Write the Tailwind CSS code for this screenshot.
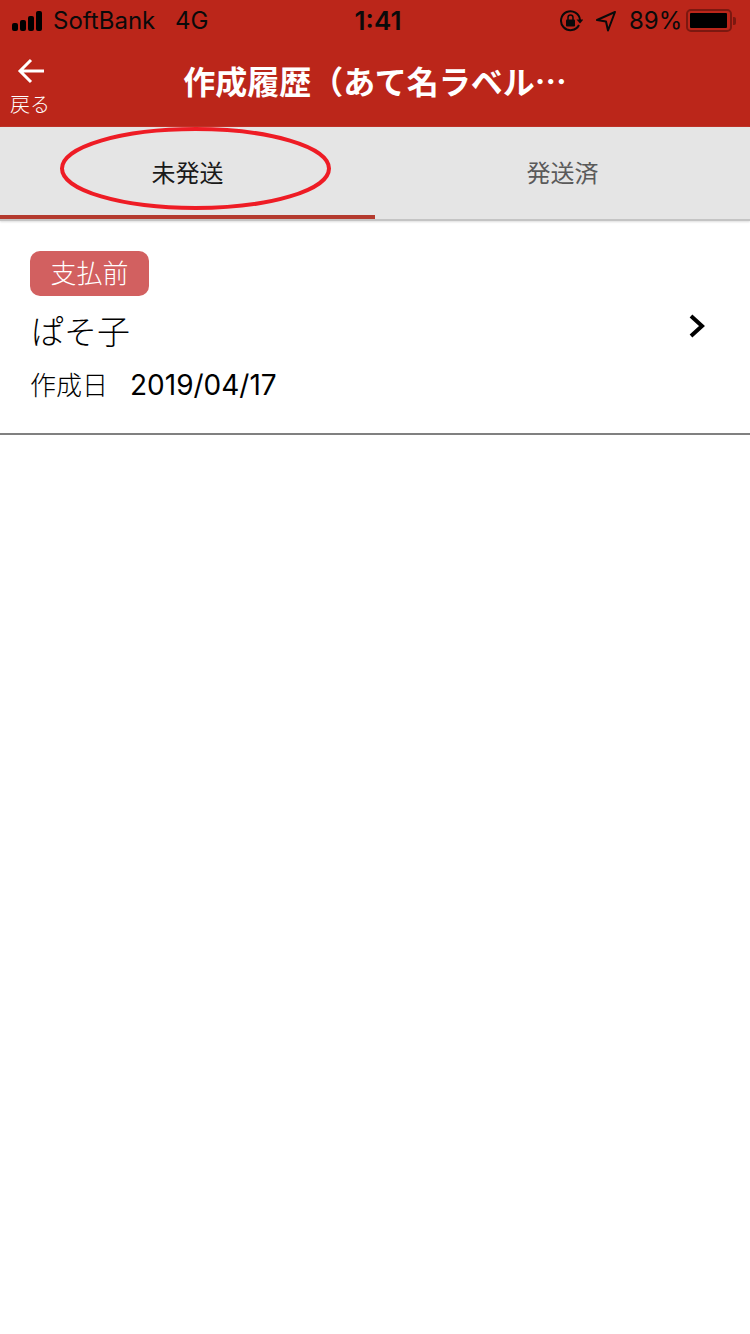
<!DOCTYPE html>
<html lang="ja">
<head>
    <meta charset="UTF-8">
    <meta name="viewport" content="width=device-width, initial-scale=1.0">
    <title>作成履歴</title>
    <script src="https://cdn.jsdelivr.net/npm/@tailwindcss/browser@4"></script>
</head>
<body class="bg-white font-['Inter','Noto_Sans_CJK_JP',sans-serif]">
    <div class="relative w-[750px] h-[1334px] overflow-hidden">
        <!-- header -->
        <div class="bg-[#bb261a] h-[127px]">
            <div class="h-[41px] pl-[12px] flex items-center text-[#0a0a0a] text-[24px] whitespace-nowrap">
                <div class="flex items-end gap-[2px] w-[33px] mt-[1px]">
                    <span class="w-[6px] h-[8px] rounded-[2px] bg-black"></span>
                    <span class="w-[6px] h-[11px] rounded-[2px] bg-black"></span>
                    <span class="w-[6px] h-[15px] rounded-[2px] bg-black"></span>
                    <span class="w-[6px] h-[20px] rounded-[2px] bg-black"></span>
                </div>
                <span class="ml-[8px] w-[122px]">SoftBank</span>
                <span class="w-[40px]">4G</span>
                <span class="ml-[132px] w-[62px] text-[26px] font-semibold text-center">1:41</span>
                <svg class="ml-[150px]" width="24" height="24" viewBox="0 0 24 24" fill="none" stroke="#0a0a0a" stroke-width="2">
                    <path d="M20 16a9.500 9.500 0 1 1 1-5"/>
                    <path d="M17.500 10.500h7l-3.500 4z" fill="#0a0a0a" stroke="none"/>
                    <rect x="7" y="10.500" width="9" height="7" rx="1" fill="#0a0a0a" stroke="none"/>
                    <path d="M9 11V8.500a2.500 2.500 0 0 1 5 0V11" stroke-width="1.500"/>
                </svg>
                <svg class="ml-[12px]" width="22" height="22" viewBox="0 0 22 22" fill="none" stroke="#0a0a0a" stroke-width="2" stroke-linejoin="round">
                    <path d="M20 2 2 10l9 1.500 2 9z"/>
                </svg>
                <span class="ml-[12px] w-[52px]">89%</span>
                <div class="ml-[5px] w-[46px] h-[23px] rounded-[5px] border-2 border-[#7c1810] p-[2px]">
                    <div class="w-[37px] h-full bg-black rounded-[1px]"></div>
                </div>
                <span class="ml-[1px] w-[3px] h-[8px] rounded-r-[2px] bg-[#7c1810]"></span>
            </div>
            <div class="relative h-[86px] flex items-center justify-center">
                <div class="absolute left-[10px] top-[16px] w-[40px] flex flex-col items-center text-white">
                    <svg class="ml-[2px]" width="30" height="28" viewBox="0 0 30 28" fill="none" stroke="white" stroke-width="3">
                        <path d="M28 14H4M15 3 4 14l11 11"/>
                    </svg>
                    <span class="mt-[8px] text-[20px] leading-[22px] whitespace-nowrap font-['Noto_Sans_CJK_JP'] font-light">戻る</span>
                </div>
                <h1 class="mb-[8px] text-white text-[32px] font-bold whitespace-nowrap font-['Noto_Sans_CJK_JP',sans-serif]">作成履歴（あて名ラベル…</h1>
            </div>
        </div>
        <!-- tabs -->
        <div class="h-[94px] bg-[#e5e5e5] flex border-b-2 border-[#c4c4c4] shadow-[0_1px_2px_#ddd]">
            <div class="flex-1 flex items-center justify-center border-b-4 border-[#b43a2e] text-[#1a1a1a] text-[24px] pt-[6px]">未発送</div>
            <div class="flex-1 flex items-center justify-center border-b-4 border-transparent text-[#5a5a5a] text-[24px] pt-[6px]">発送済</div>
        </div>
        <!-- list item -->
        <div class="h-[214px] border-b-2 border-[#808080] pt-[30px] pl-[30px] pr-[42px] flex items-center justify-between">
            <div class="self-start">
                <div class="w-[119px] h-[45px] rounded-[10px] bg-[#d26060] text-white text-[26px] font-light flex items-center justify-center">支払前</div>
                <div class="mt-[12px] pl-[1px] text-[33px] leading-[48px] text-black font-light">ぱそ子</div>
                <div class="mt-[9px] flex items-center text-black">
                    <span class="text-[26px] w-[100px] font-light">作成日</span>
                    <span class="text-[28px] leading-[40px]">2019/04/17</span>
                </div>
            </div>
            <svg class="mt-[-32px]" width="20" height="26" viewBox="0 0 20 26" fill="none" stroke="black" stroke-width="4">
                <path d="M3 3l11 10L3 23"/>
            </svg>
        </div>
        <!-- red marker circling the tab -->
        <svg class="absolute left-[58px] top-[125px]" width="276" height="88" viewBox="0 0 276 88" fill="none">
            <ellipse cx="137.500" cy="43.500" rx="133.500" ry="39.500" stroke="#ee1c25" stroke-width="4"/>
        </svg>
    </div>
</body>
</html>
